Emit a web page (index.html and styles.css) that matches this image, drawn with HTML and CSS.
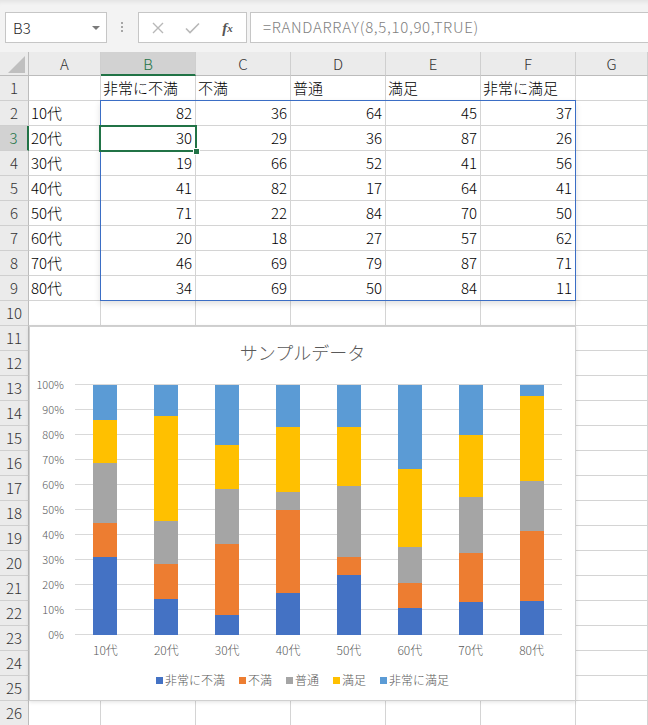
FILE: index.html
```html
<!DOCTYPE html>
<html lang="ja">
<head>
<meta charset="utf-8">
<title>Excel - サンプルデータ</title>
<link rel="stylesheet" href="styles.css">
</head>
<body>
<div class="toolbar">
  <div class="namebox"><span>B3</span><i class="caret"></i></div>
  <div class="dots"><i></i><i></i><i></i></div>
  <div class="fbtns">
    <span class="fbtn"><svg width="12" height="12" viewBox="0 0 12 12"><path d="M1 1L11 11M11 1L1 11" stroke="#b8b8b8" stroke-width="1.4" fill="none"/></svg></span>
    <span class="fbtn"><svg width="15" height="12" viewBox="0 0 15 12"><path d="M1 6.5L5 10.5L14 1.5" stroke="#b8b8b8" stroke-width="1.6" fill="none"/></svg></span>
    <span class="fbtn fx">f<span>x</span></span>
  </div>
  <div class="formula">=RANDARRAY(8,5,10,90,TRUE)</div>
</div>

<div class="sheet">
  <div class="row head">
    <span class="corner"><svg width="17" height="17" viewBox="0 0 17 17"><path d="M17 0V17H0Z" fill="#bfbfbf"/></svg></span>
    <span>A</span><span class="sel">B</span><span>C</span><span>D</span><span>E</span><span>F</span><span>G</span>
  </div>
  <div class="row"><span class="rh">1</span><span></span><span>非常に不満</span><span>不満</span><span>普通</span><span>満足</span><span>非常に満足</span><span></span></div>
  <div class="row"><span class="rh">2</span><span>10代</span><span class="n">82</span><span class="n">36</span><span class="n">64</span><span class="n">45</span><span class="n">37</span><span></span></div>
  <div class="row"><span class="rh sel">3</span><span>20代</span><span class="n">30</span><span class="n">29</span><span class="n">36</span><span class="n">87</span><span class="n">26</span><span></span></div>
  <div class="row"><span class="rh">4</span><span>30代</span><span class="n">19</span><span class="n">66</span><span class="n">52</span><span class="n">41</span><span class="n">56</span><span></span></div>
  <div class="row"><span class="rh">5</span><span>40代</span><span class="n">41</span><span class="n">82</span><span class="n">17</span><span class="n">64</span><span class="n">41</span><span></span></div>
  <div class="row"><span class="rh">6</span><span>50代</span><span class="n">71</span><span class="n">22</span><span class="n">84</span><span class="n">70</span><span class="n">50</span><span></span></div>
  <div class="row"><span class="rh">7</span><span>60代</span><span class="n">20</span><span class="n">18</span><span class="n">27</span><span class="n">57</span><span class="n">62</span><span></span></div>
  <div class="row"><span class="rh">8</span><span>70代</span><span class="n">46</span><span class="n">69</span><span class="n">79</span><span class="n">87</span><span class="n">71</span><span></span></div>
  <div class="row"><span class="rh">9</span><span>80代</span><span class="n">34</span><span class="n">69</span><span class="n">50</span><span class="n">84</span><span class="n">11</span><span></span></div>
  <div class="row"><span class="rh">10</span><span></span><span></span><span></span><span></span><span></span><span></span><span></span></div>
  <div class="row"><span class="rh">11</span><span></span><span></span><span></span><span></span><span></span><span></span><span></span></div>
  <div class="row"><span class="rh">12</span><span></span><span></span><span></span><span></span><span></span><span></span><span></span></div>
  <div class="row"><span class="rh">13</span><span></span><span></span><span></span><span></span><span></span><span></span><span></span></div>
  <div class="row"><span class="rh">14</span><span></span><span></span><span></span><span></span><span></span><span></span><span></span></div>
  <div class="row"><span class="rh">15</span><span></span><span></span><span></span><span></span><span></span><span></span><span></span></div>
  <div class="row"><span class="rh">16</span><span></span><span></span><span></span><span></span><span></span><span></span><span></span></div>
  <div class="row"><span class="rh">17</span><span></span><span></span><span></span><span></span><span></span><span></span><span></span></div>
  <div class="row"><span class="rh">18</span><span></span><span></span><span></span><span></span><span></span><span></span><span></span></div>
  <div class="row"><span class="rh">19</span><span></span><span></span><span></span><span></span><span></span><span></span><span></span></div>
  <div class="row"><span class="rh">20</span><span></span><span></span><span></span><span></span><span></span><span></span><span></span></div>
  <div class="row"><span class="rh">21</span><span></span><span></span><span></span><span></span><span></span><span></span><span></span></div>
  <div class="row"><span class="rh">22</span><span></span><span></span><span></span><span></span><span></span><span></span><span></span></div>
  <div class="row"><span class="rh">23</span><span></span><span></span><span></span><span></span><span></span><span></span><span></span></div>
  <div class="row"><span class="rh">24</span><span></span><span></span><span></span><span></span><span></span><span></span><span></span></div>
  <div class="row"><span class="rh">25</span><span></span><span></span><span></span><span></span><span></span><span></span><span></span></div>
  <div class="row"><span class="rh">26</span><span></span><span></span><span></span><span></span><span></span><span></span><span></span></div>

  <div class="range"></div>
  <div class="active"></div>
  <div class="handle"></div>

  <div class="chart">
    <div class="chart-title">サンプルデータ</div>
    <div class="plot-wrap">
      <div class="yaxis">
        <div>100%</div><div>90%</div><div>80%</div><div>70%</div><div>60%</div><div>50%</div><div>40%</div><div>30%</div><div>20%</div><div>10%</div><div>0%</div>
      </div>
      <div class="plot">
        <div class="slot"><div class="bar"><i class="s1" style="height:31.06%"></i><i class="s2" style="height:13.64%"></i><i class="s3" style="height:24.24%"></i><i class="s4" style="height:17.05%"></i><i class="s5" style="height:14.01%"></i></div></div>
        <div class="slot"><div class="bar"><i class="s1" style="height:14.42%"></i><i class="s2" style="height:13.94%"></i><i class="s3" style="height:17.31%"></i><i class="s4" style="height:41.83%"></i><i class="s5" style="height:12.50%"></i></div></div>
        <div class="slot"><div class="bar"><i class="s1" style="height:8.12%"></i><i class="s2" style="height:28.21%"></i><i class="s3" style="height:22.22%"></i><i class="s4" style="height:17.52%"></i><i class="s5" style="height:23.93%"></i></div></div>
        <div class="slot"><div class="bar"><i class="s1" style="height:16.73%"></i><i class="s2" style="height:33.47%"></i><i class="s3" style="height:6.94%"></i><i class="s4" style="height:26.12%"></i><i class="s5" style="height:16.74%"></i></div></div>
        <div class="slot"><div class="bar"><i class="s1" style="height:23.91%"></i><i class="s2" style="height:7.41%"></i><i class="s3" style="height:28.28%"></i><i class="s4" style="height:23.57%"></i><i class="s5" style="height:16.83%"></i></div></div>
        <div class="slot"><div class="bar"><i class="s1" style="height:10.87%"></i><i class="s2" style="height:9.78%"></i><i class="s3" style="height:14.67%"></i><i class="s4" style="height:30.98%"></i><i class="s5" style="height:33.70%"></i></div></div>
        <div class="slot"><div class="bar"><i class="s1" style="height:13.07%"></i><i class="s2" style="height:19.60%"></i><i class="s3" style="height:22.44%"></i><i class="s4" style="height:24.72%"></i><i class="s5" style="height:20.17%"></i></div></div>
        <div class="slot"><div class="bar"><i class="s1" style="height:13.71%"></i><i class="s2" style="height:27.82%"></i><i class="s3" style="height:20.16%"></i><i class="s4" style="height:33.87%"></i><i class="s5" style="height:4.44%"></i></div></div>
      </div>
    </div>
    <div class="cats"><span>10代</span><span>20代</span><span>30代</span><span>40代</span><span>50代</span><span>60代</span><span>70代</span><span>80代</span></div>
    <div class="legend">
      <span><i class="key s1"></i>非常に不満</span>
      <span><i class="key s2"></i>不満</span>
      <span><i class="key s3"></i>普通</span>
      <span><i class="key s4"></i>満足</span>
      <span><i class="key s5"></i>非常に満足</span>
    </div>
  </div>
</div>
</body>
</html>
```

FILE: styles.css
```css
* { box-sizing: border-box; margin: 0; padding: 0; }
html, body { width: 648px; height: 725px; overflow: hidden; background: #fff; }
body { font-family: "Noto Sans CJK JP", "Noto Sans", sans-serif; color: #000; font-weight: 300; }

/* formula bar */
.toolbar {
  height: 52px;
  background: #f3f3f3;
  display: flex;
  align-items: flex-start;
  padding: 12px 0 0 5px;
  box-shadow: inset 0 5px 4px -3px rgba(0, 0, 0, 0.07);
}
.namebox {
  width: 102px;
  height: 31px;
  background: #fff;
  border: 1px solid #c6c6c6;
  display: flex;
  align-items: center;
  justify-content: space-between;
  padding: 0 6px 0 7px;
  font-size: 15px;
  color: #262626;
}
.caret {
  width: 0; height: 0;
  border-left: 4px solid transparent;
  border-right: 4px solid transparent;
  border-top: 4px solid #7a7a7a;
}
.dots {
  width: 3px;
  margin: 10px 14px 0 14px;
  display: flex;
  flex-direction: column;
  gap: 2px;
}
.dots i { display: block; width: 2px; height: 2px; background: #a6a6a6; }
.fbtns {
  width: 109px;
  height: 31px;
  background: #fff;
  border: 1px solid #c6c6c6;
  display: flex;
  align-items: center;
  padding-left: 1px;
}
.fbtn {
  width: 35px;
  display: flex;
  justify-content: center;
  align-items: center;
}
.fx {
  font-family: "Liberation Serif", serif;
  font-style: italic;
  font-weight: bold;
  font-size: 15px;
  color: #555;
  line-height: 20px;
}
.fx span { font-size: 11px; }
.formula {
  flex: 1;
  margin-left: 3px;
  margin-right: -2px;
  height: 31px;
  background: #fff;
  border: 1px solid #c6c6c6;
  padding-left: 12px;
  font-size: 15px;
  letter-spacing: 0.7px;
  line-height: 27px;
  color: #7f7f7f;
  white-space: nowrap;
}

/* sheet grid */
.sheet { position: relative; }
.row {
  display: grid;
  grid-template-columns: 29px 72px 95px 95px 95px 95px 95px 72px;
  height: 25px;
}
.row > span {
  border-right: 1px solid #d4d4d4;
  border-bottom: 1px solid #d4d4d4;
  font-size: 15px;
  line-height: 24px;
  padding: 0 3px 0 2px;
  white-space: nowrap;
  overflow: hidden;
}
.row > .n { text-align: right; padding-right: 3px; }
.row > .rh {
  background: #ebebeb;
  text-align: center;
  color: #333;
  padding: 0;
  border-right-color: #bcbcbc;
  border-bottom-color: #cfcfcf;
}
.row > .rh.sel {
  background: #d2d2d2;
  color: #217346;
  border-right: 2px solid #217346;
}
.head { height: 24px; }
.head > span {
  background: #ebebeb;
  text-align: center;
  color: #333;
  line-height: 23px;
  padding: 0;
  border-right-color: #cfcfcf;
  border-bottom-color: #bcbcbc;
}
.head > .sel {
  background: #d2d2d2;
  color: #217346;
  border-bottom: 2px solid #217346;
}
.head > .corner {
  display: flex;
  justify-content: flex-end;
  align-items: flex-end;
  padding: 0 3px 2px 0;
  border-right-color: #bcbcbc;
}
.head > .corner svg { display: block; }

/* selection overlays */
.range {
  position: absolute;
  left: 100px;
  top: 48px;
  width: 476px;
  height: 201px;
  border: 1px solid #3b6ec5;
  box-shadow: 0 3px 6px rgba(0, 0, 0, 0.12);
}
.active {
  position: absolute;
  left: 99px;
  top: 73px;
  width: 98px;
  height: 27px;
  border: 2px solid #217346;
}
.handle {
  position: absolute;
  left: 193px;
  top: 96px;
  width: 7px;
  height: 7px;
  background: #217346;
  border: 1px solid #fff;
}

/* chart */
.chart {
  position: absolute;
  left: 29px;
  top: 274px;
  width: 547px;
  height: 375px;
  background: #fff;
  border: 1px solid #d0d0d0;
  box-shadow: 0 1px 4px rgba(0, 0, 0, 0.12);
  padding-top: 13px;
  color: #595959;
}
.chart-title {
  text-align: center;
  font-size: 18px;
  line-height: 24px;
}
.plot-wrap {
  display: flex;
  height: 251px;
  margin-top: 20px;
}
.yaxis {
  width: 45px;
  padding-right: 11px;
  margin-top: -12px;
  align-self: flex-start;
  font-size: 11px;
  text-align: right;
}
.yaxis div { height: 25px; line-height: 25px; }
.plot {
  width: 487px;
  height: 251px;
  display: flex;
  align-items: flex-end;
  background: repeating-linear-gradient(to bottom, #d9d9d9 0 1px, transparent 1px 25px);
}
.slot {
  flex: 1;
  height: 250px;
  display: flex;
  justify-content: center;
}
.bar {
  width: 24px;
  display: flex;
  flex-direction: column-reverse;
}
.bar i { display: block; }
.s1 { background: #4472c4; }
.s2 { background: #ed7d31; }
.s3 { background: #a5a5a5; }
.s4 { background: #ffc000; }
.s5 { background: #5b9bd5; }
.cats {
  display: flex;
  margin-left: 45px;
  width: 487px;
  margin-top: 7px;
  font-size: 12px;
  line-height: 16px;
}
.cats span { flex: 1; text-align: center; }
.legend {
  display: flex;
  justify-content: center;
  gap: 14px;
  margin-top: 14px;
  font-size: 12px;
  line-height: 16px;
}
.legend span { display: flex; align-items: center; }
.key {
  display: block;
  width: 7px;
  height: 7px;
  margin-right: 2px;
}
```
